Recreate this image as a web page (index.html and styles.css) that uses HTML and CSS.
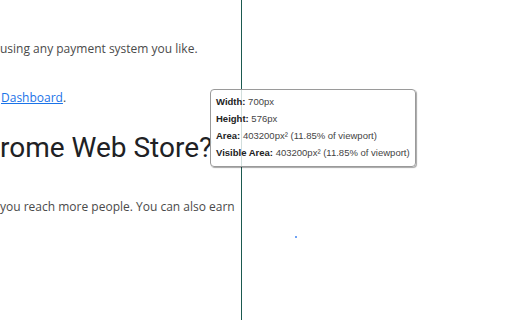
FILE: index.html
```html
<!DOCTYPE html>
<html>
<head>
<meta charset="utf-8">
<link rel="stylesheet" href="styles.css">
</head>
<body>
<main class="page">
  <p class="text p1">using any payment system you like.</p>
  <p class="text p2"><a class="link" href="#">Dashboard</a>.</p>
  <h1 class="title">rome Web Store?</h1>
  <p class="text p3">you reach more people. You can also earn</p>
</main>
<div class="guide"></div>
<div class="dot"></div>
<div class="tip">
  <div class="row"><b>Width:</b> 700px</div>
  <div class="row"><b>Height:</b> 576px</div>
  <div class="row"><b>Area:</b> 403200px² (11.85% of viewport)</div>
  <div class="row"><b>Visible Area:</b> 403200px² (11.85% of viewport)</div>
</div>
</body>
</html>
```
FILE: styles.css
```css
html, body {
  margin: 0;
  padding: 0;
  background: #ffffff;
  width: 512px;
  height: 320px;
  overflow: hidden;
}
.page {
  display: flex;
  flex-direction: column;
  align-items: flex-start;
  padding-top: 39px;
}
.text {
  margin: 0;
  font-family: "Open Sans", sans-serif;
  font-size: 12px;
  line-height: 20px;
  color: #4a4a4a;
  white-space: nowrap;
}
.p2 { margin-top: 29px; margin-left: 1px; }
.p3 { margin-top: 29px; }
.link {
  color: #1a73e8;
  text-decoration: underline;
}
.title {
  margin: 20px 0 0 0;
  font-family: Roboto, sans-serif;
  font-weight: 400;
  font-size: 28px;
  line-height: 40px;
  color: #202124;
  white-space: nowrap;
}
.guide {
  position: absolute;
  left: 241px;
  top: 0;
  width: 1px;
  height: 320px;
  background: #1b5a50;
}
.dot {
  position: absolute;
  left: 295px;
  top: 236px;
  width: 2px;
  height: 2px;
  background: #6fa3f5;
}
.tip {
  position: absolute;
  left: 210px;
  top: 89px;
  width: 194px;
  height: 68px;
  padding: 3px 5px 5px 5px;
  background: rgba(255, 255, 255, 0.8);
  border: 1px solid #9a9a9a;
  border-radius: 4px;
  box-shadow: 1px 1px 1px rgba(0,0,0,0.35);
  font-family: "Liberation Sans", Arial, sans-serif;
  font-size: 9.5px;
  color: #444;
}
.row {
  line-height: 17px;
  white-space: nowrap;
}
.row b { color: #222; }
```
